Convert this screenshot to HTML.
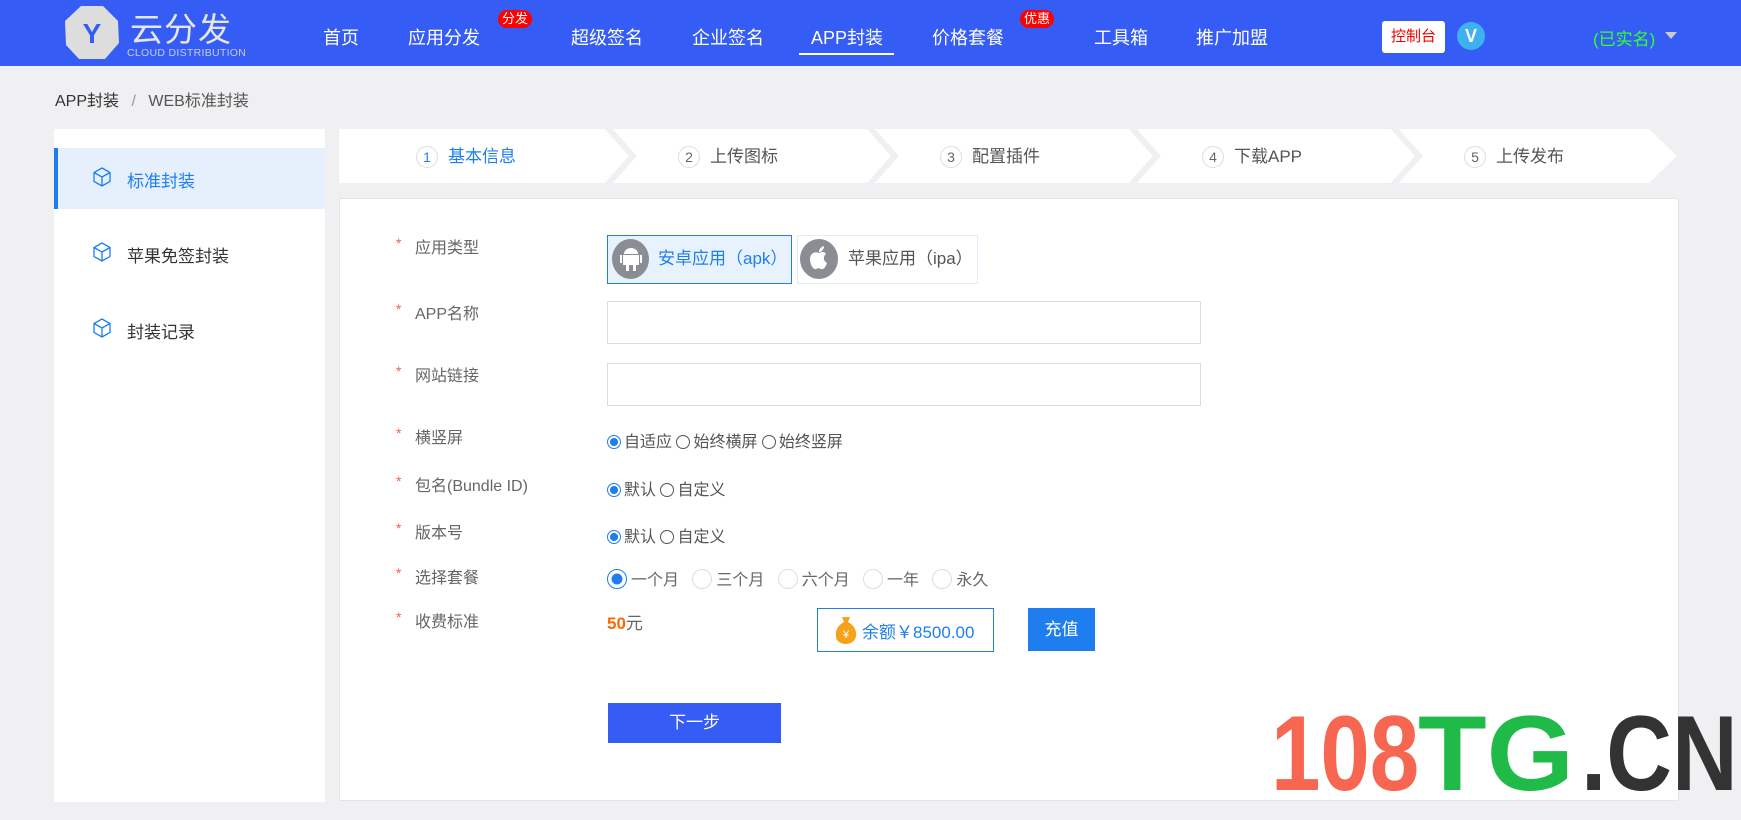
<!DOCTYPE html>
<html><head><meta charset="utf-8"><style>
*{margin:0;padding:0;box-sizing:border-box}
body{width:1741px;height:820px;background:#f0f0f2;font-family:"Liberation Sans","Noto Sans CJK SC",sans-serif;position:relative;overflow:hidden;color:#333}
.a{position:absolute;white-space:nowrap}
.hd{position:absolute;left:0;top:0;width:1741px;height:66px;background:#355cf4}
.nav{color:#fff;font-size:18px;top:24px}
.badge{background:#f00;color:#fff;font-size:13px;border-radius:10px;padding:0 4px;line-height:18px;top:10px}
.side{left:54px;top:129px;width:271px;height:673px;background:#fff}
.si{font-size:17px;color:#333}
.step{font-size:17px;color:#555;top:142px}
.circ{display:inline-block;width:22px;height:22px;border:1px solid #ddd;border-radius:50%;text-align:center;line-height:20px;font-size:14px;margin-right:10px;color:#666}
.lab{font-size:16px;color:#666}
.star{color:#f55;font-size:14px}
.inp{border:1px solid #ddd;background:#fff;height:43px;width:594px;left:607px}
.rad{font-size:16px;color:#555}
.r{display:inline-block;width:14px;height:14px;border:1px solid #555;border-radius:50%;vertical-align:-2px;margin-right:3px}
.r.on{border:1px solid #1e7ef0;background:radial-gradient(circle,#1e7ef0 45%,#fff 50%)}
.rl{display:inline-block;width:20px;height:20px;border:1px solid #ddd;border-radius:50%;vertical-align:-4px;margin-right:4px}
.rl.on{border:1px solid #1e7ef0;background:radial-gradient(circle,#1e7ef0 40%,#fff 46%)}
.wm{font-size:107px;font-weight:bold;line-height:107px;top:700px;transform-origin:left top}
</style></head><body>
<div class="hd"></div>
<svg class="a" style="left:63px;top:5px" width="58" height="56" viewBox="0 0 58 56"><polygon points="18,1 40,1 55,16 56,38 42,54 16,54 3,40 2,16" fill="#ddd"/><text x="29" y="38" text-anchor="middle" font-family="Liberation Sans" font-weight="bold" font-size="28" fill="#355cf4">Y</text></svg>
<div class="a" style="left:130px;top:3px;font-size:33px;color:#e6e6e6;letter-spacing:1px">云分发</div>
<div class="a" style="left:127px;top:47px;font-size:10.5px;color:#ccd;letter-spacing:0.3px">CLOUD DISTRIBUTION</div>
<div class="a nav" style="left:323px">首页</div>
<div class="a nav" style="left:408px">应用分发</div>
<div class="a badge" style="left:498px">分发</div>
<div class="a nav" style="left:571px">超级签名</div>
<div class="a nav" style="left:692px">企业签名</div>
<div class="a nav" style="left:811px">APP封装</div>
<div class="a" style="left:799px;top:53px;width:95px;height:2px;background:#fff"></div>
<div class="a nav" style="left:932px">价格套餐</div>
<div class="a badge" style="left:1020px">优惠</div>
<div class="a nav" style="left:1094px">工具箱</div>
<div class="a nav" style="left:1196px">推广加盟</div>
<div class="a" style="left:1382px;top:21px;width:63px;height:32px;background:#fff;border-radius:3px;color:#e00;font-size:15px;text-align:center;line-height:32px">控制台</div>
<div class="a" style="left:1457px;top:22px;width:28px;height:28px;border-radius:50%;background:#3fb0f0;color:#fff;font-weight:bold;font-size:18px;text-align:center;line-height:28px">V</div>
<div class="a" style="left:1593px;top:25px;font-size:17px;color:#3f3">(已实名)</div>
<div class="a" style="left:1665px;top:32px;border:6px solid transparent;border-top:7px solid #ccc"></div>

<div class="a" style="left:55px;top:87px;font-size:16px;color:#333">APP封装 <span style="color:#999;margin:0 8px">/</span> <span style="color:#555">WEB标准封装</span></div>

<div class="a side"></div>
<div class="a" style="left:54px;top:148px;width:271px;height:61px;background:#e6f0fc;border-left:4px solid #1e7ef0"></div>
<svg class="a" style="left:93px;top:167px" width="18" height="20" viewBox="0 0 18 20"><path d="M9 1L17 5.5V14.5L9 19L1 14.5V5.5Z M1 5.5L9 10L17 5.5 M9 10V19" fill="none" stroke="#1e7ef0" stroke-width="1.3"/></svg>
<div class="a si" style="left:127px;top:167px;color:#1e7ef0">标准封装</div>
<svg class="a" style="left:93px;top:242px" width="18" height="20" viewBox="0 0 18 20"><path d="M9 1L17 5.5V14.5L9 19L1 14.5V5.5Z M1 5.5L9 10L17 5.5 M9 10V19" fill="none" stroke="#1e7ef0" stroke-width="1.3"/></svg>
<div class="a si" style="left:127px;top:242px">苹果免签封装</div>
<svg class="a" style="left:93px;top:318px" width="18" height="20" viewBox="0 0 18 20"><path d="M9 1L17 5.5V14.5L9 19L1 14.5V5.5Z M1 5.5L9 10L17 5.5 M9 10V19" fill="none" stroke="#1e7ef0" stroke-width="1.3"/></svg>
<div class="a si" style="left:127px;top:318px">封装记录</div>

<svg class="a" style="left:339px;top:129px" width="1340" height="55">
<polygon points="0,0 1310,0 1338,27 1310,54 0,54" fill="#fff"/>
<g fill="none" stroke="#f0f0f2" stroke-width="6"><polyline points="268,-2 294,27 268,56"/><polyline points="530,-2 556,27 530,56"/><polyline points="792,-2 818,27 792,56"/><polyline points="1054,-2 1080,27 1054,56"/></g>
</svg>
<div class="a step" style="left:416px;color:#1e7ef0"><span class="circ" style="color:#1e7ef0">1</span>基本信息</div>
<div class="a step" style="left:678px"><span class="circ">2</span>上传图标</div>
<div class="a step" style="left:940px"><span class="circ">3</span>配置插件</div>
<div class="a step" style="left:1202px"><span class="circ">4</span>下载APP</div>
<div class="a step" style="left:1464px"><span class="circ">5</span>上传发布</div>

<div class="a" style="left:339px;top:198px;width:1340px;height:603px;background:#fff;border:1px solid #e4e4e4;border-radius:2px"></div>

<div class="a star" style="left:396px;top:235px">*</div><div class="a lab" style="left:415px;top:234px">应用类型</div>
<div class="a star" style="left:396px;top:301px">*</div><div class="a lab" style="left:415px;top:300px">APP名称</div>
<div class="a star" style="left:396px;top:363px">*</div><div class="a lab" style="left:415px;top:362px">网站链接</div>
<div class="a star" style="left:396px;top:425px">*</div><div class="a lab" style="left:415px;top:424px">横竖屏</div>
<div class="a star" style="left:396px;top:473px">*</div><div class="a lab" style="left:415px;top:472px">包名(Bundle ID)</div>
<div class="a star" style="left:396px;top:520px">*</div><div class="a lab" style="left:415px;top:519px">版本号</div>
<div class="a star" style="left:396px;top:565px">*</div><div class="a lab" style="left:415px;top:564px">选择套餐</div>
<div class="a star" style="left:396px;top:609px">*</div><div class="a lab" style="left:415px;top:608px">收费标准</div>

<div class="a" style="left:607px;top:235px;width:185px;height:49px;border:1px solid #1e7ef0;background:#e8f2fd"></div>
<div class="a" style="left:612px;top:239px;width:37px;height:40px;border-radius:50%;background:#8a8e94"></div>
<svg class="a" style="left:619px;top:246px" width="24" height="26" viewBox="0 0 24 26"><path d="M5 8a7 6 0 0 1 14 0Z M4 9h16v10h-16Z M1 9h2v8h-2Z M21 9h2v8h-2Z M7 19h3v6h-3Z M14 19h3v6h-3Z" fill="#fff"/></svg>
<div class="a" style="left:658px;top:244px;font-size:17px;color:#1e7ef0">安卓应用（apk）</div>
<div class="a" style="left:797px;top:235px;width:181px;height:49px;border:1px solid #e0ecfb;background:#fff"></div>
<div class="a" style="left:800px;top:239px;width:38px;height:40px;border-radius:50%;background:#8a8e94"></div>
<svg class="a" style="left:807px;top:244px" width="24" height="30" viewBox="0 0 24 30"><path d="M12 9c2-1 5-2 7 1-3 2-3 7 1 9-1 3-3 7-6 6-2-1-3-1-5 0-3 1-6-5-6-10 0-5 4-8 9-6Z M12 8c0-3 2-5 5-6 0 3-2 6-5 6Z" fill="#fff"/></svg>
<div class="a" style="left:848px;top:244px;font-size:17px;color:#555">苹果应用（ipa）</div>

<div class="a inp" style="top:301px"></div>
<div class="a inp" style="top:363px"></div>

<div class="a rad" style="left:607px;top:428px"><span class="r on"></span>自适应 <span class="r"></span>始终横屏 <span class="r"></span>始终竖屏</div>
<div class="a rad" style="left:607px;top:476px"><span class="r on"></span>默认 <span class="r"></span>自定义</div>
<div class="a rad" style="left:607px;top:523px"><span class="r on"></span>默认 <span class="r"></span>自定义</div>
<div class="a rad" style="left:607px;top:566px;color:#666"><span class="rl on"></span>一个月 &nbsp; <span class="rl"></span>三个月 &nbsp; <span class="rl"></span>六个月 &nbsp; <span class="rl"></span>一年 &nbsp; <span class="rl"></span>永久</div>

<div class="a" style="left:607px;top:609px;font-size:17px;color:#666"><b style="color:#f60">50</b>元</div>
<div class="a" style="left:817px;top:608px;width:177px;height:44px;border:1px solid #1e7ef0;background:#fff"></div>
<svg class="a" style="left:834px;top:615px" width="24" height="30" viewBox="0 0 24 30"><path d="M8 2h8l-2 5c6 3 9 9 8 14-1 6-6 8-10 8s-10-2-10-8C1 16 4 10 10 7Z" fill="#f6a11a"/><text x="12" y="23" text-anchor="middle" font-size="11" fill="#fff" font-family="Liberation Sans">¥</text></svg>
<div class="a" style="left:862px;top:618px;font-size:17px;color:#1e7ef0">余额￥8500.00</div>
<div class="a" style="left:1028px;top:608px;width:67px;height:43px;background:#1e7ef0;color:#fff;font-size:17px;text-align:center;line-height:43px">充值</div>

<div class="a" style="left:608px;top:703px;width:173px;height:40px;background:#355cf4;color:#fff;font-size:17px;text-align:center;line-height:40px">下一步</div>

<div class="a wm" style="left:1271px;color:#f66650;transform:scaleX(0.83)">108</div>
<div class="a wm" style="left:1418px;color:#1fba48;transform:scaleX(1.05)">TG</div>
<div class="a wm" style="left:1581px;color:#333;transform:scaleX(0.85)">.CN</div>
</body></html>
